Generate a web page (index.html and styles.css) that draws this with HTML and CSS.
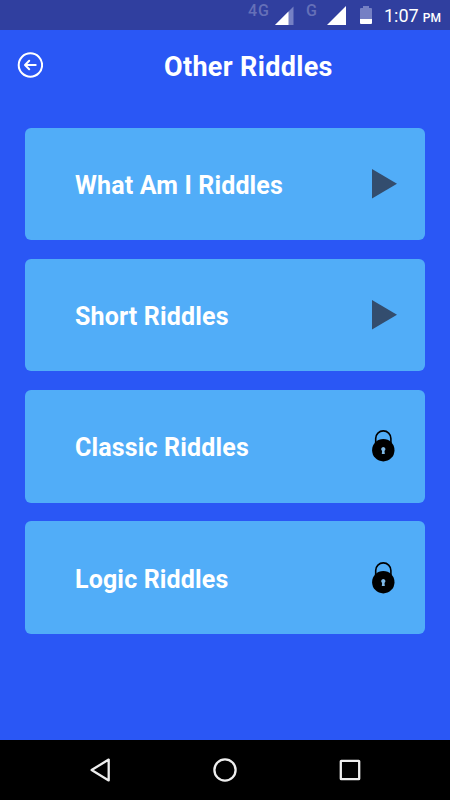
FILE: index.html
```html
<!DOCTYPE html>
<html lang="en">
<head>
<meta charset="utf-8">
<title>Other Riddles</title>
<link rel="stylesheet" href="styles.css">
</head>
<body>
<div class="screen">
  <div class="status">
    <span class="net net-4g">4G</span>
    <svg class="signal" width="19" height="19" viewBox="0 0 19 19"><path d="M0 19 18.500 .5V19z" fill="#7580c4"/><path d="M0 19 13.500 5.500V19z" fill="#fff"/></svg>
    <span class="net net-g">G</span>
    <svg class="signal" width="19" height="19" viewBox="0 0 19 19"><path d="M0 19 19 0V19z" fill="#fff"/></svg>
    <svg class="battery" width="12" height="19" viewBox="0 0 12 19"><path d="M3 0H9V2H11Q12 2 12 3V14H0V3Q0 2 1 2H3z" fill="#7580c4"/><path d="M0 13H12V17Q12 18 11 18H1Q0 18 0 17z" fill="#fff"/></svg>
    <span class="clock">1:07<small class="meridiem">PM</small></span>
  </div>
  <header class="header">
    <svg class="back" width="26" height="26" viewBox="0 0 26 26" fill="none" stroke="#fff" stroke-width="2" stroke-linecap="round" stroke-linejoin="round"><circle cx="13.400" cy="13" r="11.700"/><path d="M18.700 13H8.200M12.200 8.800 8 13 12.200 17.200"/></svg>
    <h1 class="title">Other Riddles</h1>
  </header>
  <main class="list">
    <div class="card"><span class="label">What Am I Riddles</span><svg class="icon" width="26" height="34" viewBox="0 0 26 34"><path d="M0 2 25 16.700 0 31.400z" fill="#334d6e"/></svg></div>
    <div class="card"><span class="label">Short Riddles</span><svg class="icon" width="26" height="34" viewBox="0 0 26 34"><path d="M0 2 25 16.700 0 31.400z" fill="#334d6e"/></svg></div>
    <div class="card"><span class="label">Classic Riddles</span><svg class="icon" width="26" height="34" viewBox="0 0 26 34"><path d="M3.700 14V9.500a7.600 7.600 0 0 1 15.200 0V14" fill="none" stroke="#000" stroke-width="1.600"/><circle cx="11.300" cy="21.200" r="11.200"/><path d="M11.300 18a2.200 2.200 0 0 1 1.200 4l.3 3.100h-3l.3-3.100a2.200 2.200 0 0 1 1.200-4z" fill="#80bae6"/></svg></div>
    <div class="card"><span class="label">Logic Riddles</span><svg class="icon" width="26" height="34" viewBox="0 0 26 34"><path d="M3.700 14V9.500a7.600 7.600 0 0 1 15.200 0V14" fill="none" stroke="#000" stroke-width="1.600"/><circle cx="11.300" cy="21.200" r="11.200"/><path d="M11.300 18a2.200 2.200 0 0 1 1.200 4l.3 3.100h-3l.3-3.100a2.200 2.200 0 0 1 1.200-4z" fill="#80bae6"/></svg></div>
  </main>
  <nav class="nav">
    <svg width="26" height="26" viewBox="0 0 26 26"><path d="M21.700 2.600V23.400L4.600 13z"/></svg>
    <svg width="26" height="26" viewBox="0 0 26 26"><circle cx="13" cy="13" r="10.600"/></svg>
    <svg width="26" height="26" viewBox="0 0 26 26"><rect x="3.800" y="3.800" width="18.400" height="18.400" rx=".5"/></svg>
  </nav>
</div>
</body>
</html>
```

FILE: styles.css
```css
* {
  box-sizing: border-box;
}

body {
  margin: 0;
  font-family: Roboto, "Liberation Sans", sans-serif;
  color: #fff;
}

.screen {
  width: 450px;
  height: 800px;
  display: flex;
  flex-direction: column;
  overflow: hidden;
  background: #2a57f5;
}

.status {
  height: 30px;
  flex: none;
  display: flex;
  align-items: flex-start;
  justify-content: flex-end;
  padding-right: 10px;
  background: #303f9f;
}

.net {
  margin-top: 2px;
  font-size: 16px;
  line-height: 18px;
  font-weight: 500;
  color: #6570b8;
  white-space: nowrap;
}

.net-4g {
  width: 27px;
  letter-spacing: .8px;
}

.net-g {
  width: 21px;
  margin-left: 12px;
}

.signal,
.battery {
  margin-top: 6px;
  flex: none;
}

.battery {
  margin-left: 14px;
}

.clock {
  width: 56px;
  margin-left: 12px;
  padding-top: 1px;
  font-size: 18px;
  line-height: 30px;
  font-weight: 400;
  white-space: nowrap;
}

.meridiem {
  margin-left: 4px;
  font-size: 12px;
  font-weight: 500;
}

.header {
  height: 97.5px;
  flex: none;
  display: grid;
  grid-template-columns: 147px 1fr;
  align-items: start;
  padding: 22px 0 0 17px;
}

.title {
  margin: 0;
  font-size: 27px;
  line-height: 30px;
  font-weight: 700;
  letter-spacing: .33px;
  white-space: nowrap;
}

.list {
  flex: 1;
  display: flex;
  flex-direction: column;
  gap: 18.75px;
  padding: 0 25px;
}

.card {
  height: 112.5px;
  flex: none;
  display: flex;
  align-items: center;
  justify-content: space-between;
  padding: 2px 27px 0 50px;
  border-radius: 6px;
  background: #51adf8;
}

.label {
  padding-top: 2px;
  font-size: 25px;
  line-height: 30px;
  font-weight: 700;
  letter-spacing: .15px;
  white-space: nowrap;
}

.icon {
  margin-bottom: 2px;
}

.nav {
  height: 60px;
  flex: none;
  display: flex;
  align-items: center;
  justify-content: space-between;
  padding: 0 87px;
  background: #000;
}

.nav svg {
  fill: none;
  stroke: #eee;
  stroke-width: 2.3;
  stroke-linejoin: round;
}
```
